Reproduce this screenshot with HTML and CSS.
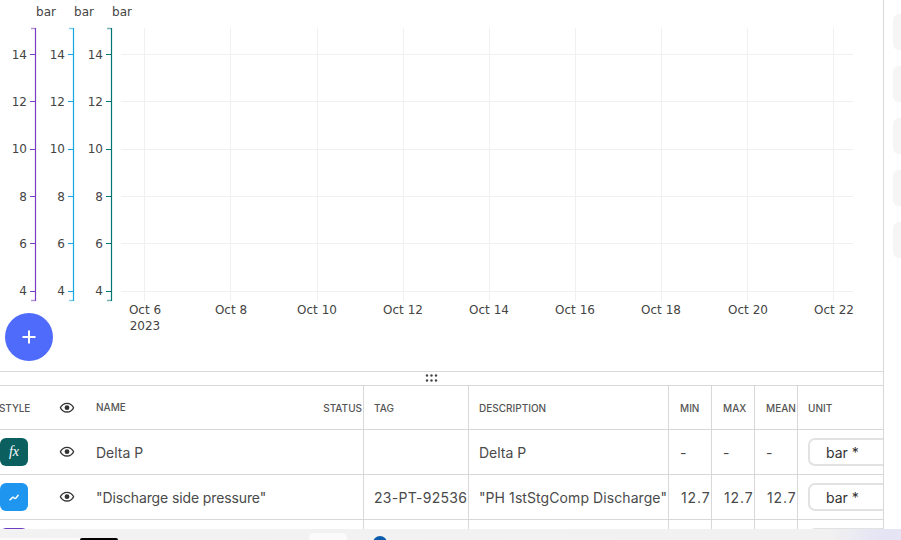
FILE: index.html
```html
<!DOCTYPE html>
<html lang="en">
<head>
<meta charset="utf-8">
<title>Trend chart</title>
<link rel="stylesheet" href="styles.css">
</head>
<body>
<div class="app">
  <main class="main">
    <section class="chart">
      <svg class="plot" width="883" height="371" viewBox="0 0 883 371">
        <g class="grid">
          <path d="M144.5 28V301M230.5 28V301M317.5 28V301M403.5 28V301M489.5 28V301M575.5 28V301M661.5 28V301M747.5 28V301M833.5 28V301"/>
          <path d="M121 54.5H853M121 101.5H853M121 149.5H853M121 196.5H853M121 243.5H853M121 291.5H853"/>
        </g>
        <g class="axis axis-purple">
          <path class="cap" d="M31 28.5H35M31 300.5H35"/>
          <path d="M35.5 28V301M30 54.5H35M30 101.5H35M30 149.5H35M30 196.5H35M30 243.5H35M30 291.5H35"/>
        </g>
        <g class="axis axis-blue">
          <path class="cap" d="M69 28.5H73M69 300.5H73"/>
          <path d="M73.5 28V301M68 54.5H73M68 101.5H73M68 149.5H73M68 196.5H73M68 243.5H73M68 291.5H73"/>
        </g>
        <g class="axis axis-teal">
          <path class="cap" d="M107 28.5H111M107 300.5H111"/>
          <path d="M111.5 28V301M106 54.5H111M106 101.5H111M106 149.5H111M106 196.5H111M106 243.5H111M106 291.5H111"/>
        </g>
        <g class="labels">
          <text x="46" y="16" class="mid">bar</text><text x="84" y="16" class="mid">bar</text><text x="122" y="16" class="mid">bar</text>
          <g class="end">
            <text x="27" y="59">14</text><text x="27" y="106">12</text><text x="27" y="153">10</text><text x="27" y="201">8</text><text x="27" y="248">6</text><text x="27" y="295">4</text>
            <text x="65" y="59">14</text><text x="65" y="106">12</text><text x="65" y="153">10</text><text x="65" y="201">8</text><text x="65" y="248">6</text><text x="65" y="295">4</text>
            <text x="103" y="59">14</text><text x="103" y="106">12</text><text x="103" y="153">10</text><text x="103" y="201">8</text><text x="103" y="248">6</text><text x="103" y="295">4</text>
          </g>
          <g class="mid">
            <text x="145" y="314">Oct 6</text><text x="145" y="330">2023</text>
            <text x="231" y="314">Oct 8</text><text x="317" y="314">Oct 10</text><text x="403" y="314">Oct 12</text><text x="489" y="314">Oct 14</text><text x="575" y="314">Oct 16</text><text x="661" y="314">Oct 18</text><text x="748" y="314">Oct 20</text><text x="834" y="314">Oct 22</text>
          </g>
        </g>
      </svg>
      <button class="fab" type="button" aria-label="Add">
        <svg width="16" height="16" viewBox="0 0 16 16"><path d="M8 1.5V14.5M1.5 8H14.5"/></svg>
      </button>
    </section>

    <div class="handle">
      <svg width="13" height="8" viewBox="0 0 13 8"><g class="dots"><circle cx="2" cy="1.5" r="1.2"/><circle cx="6.5" cy="1.5" r="1.2"/><circle cx="11" cy="1.5" r="1.2"/><circle cx="2" cy="6.5" r="1.2"/><circle cx="6.5" cy="6.5" r="1.2"/><circle cx="11" cy="6.5" r="1.2"/></g></svg>
    </div>

    <section class="table">
      <div class="row head">
        <div class="cell style-col head-style">STYLE</div>
        <div class="cell eye-col"><svg class="eye" viewBox="0 0 24 24"><path d="M12 6c3.79 0 7.17 2.13 8.82 5.5C19.17 14.87 15.79 17 12 17s-7.17-2.13-8.82-5.5C4.83 8.13 8.21 6 12 6m0-2C7 4 2.73 7.11 1 11.5 2.73 15.89 7 19 12 19s9.27-3.11 11-7.5C21.27 7.11 17 4 12 4z"/><circle cx="12" cy="11.5" r="3.6"/></svg></div>
        <div class="cell name-col head-name"><span class="name-up">NAME</span><span>STATUS</span></div>
        <div class="cell line">TAG</div>
        <div class="cell line">DESCRIPTION</div>
        <div class="cell line num">MIN</div>
        <div class="cell line num">MAX</div>
        <div class="cell line num">MEAN</div>
        <div class="cell line">UNIT</div>
      </div>
      <div class="row">
        <div class="cell style-col"><span class="swatch swatch-teal"><span class="fx">fx</span></span></div>
        <div class="cell eye-col"><svg class="eye" viewBox="0 0 24 24"><path d="M12 6c3.79 0 7.17 2.13 8.82 5.5C19.17 14.87 15.79 17 12 17s-7.17-2.13-8.82-5.5C4.83 8.13 8.21 6 12 6m0-2C7 4 2.73 7.11 1 11.5 2.73 15.89 7 19 12 19s9.27-3.11 11-7.5C21.27 7.11 17 4 12 4z"/><circle cx="12" cy="11.5" r="3.6"/></svg></div>
        <div class="cell name-col">Delta P</div>
        <div class="cell line"></div>
        <div class="cell line">Delta P</div>
        <div class="cell line num dash">-</div>
        <div class="cell line num dash">-</div>
        <div class="cell line num dash">-</div>
        <div class="cell line unit"><span class="unit-box">bar *</span></div>
      </div>
      <div class="row">
        <div class="cell style-col"><span class="swatch swatch-blue"><svg width="12" height="12" viewBox="0 0 12 12"><path d="M1.5 9C3 8.5 4 6.2 5 6.2s1 1.4 2.2 1.4S9 5 10.5 3.8"/></svg></span></div>
        <div class="cell eye-col"><svg class="eye" viewBox="0 0 24 24"><path d="M12 6c3.79 0 7.17 2.13 8.82 5.5C19.17 14.87 15.79 17 12 17s-7.17-2.13-8.82-5.5C4.83 8.13 8.21 6 12 6m0-2C7 4 2.73 7.11 1 11.5 2.73 15.89 7 19 12 19s9.27-3.11 11-7.5C21.27 7.11 17 4 12 4z"/><circle cx="12" cy="11.5" r="3.6"/></svg></div>
        <div class="cell name-col name-text">"Discharge side pressure"</div>
        <div class="cell line tag-text">23-PT-92536</div>
        <div class="cell line desc-text">"PH 1stStgComp Discharge"</div>
        <div class="cell line num digits">12.7</div>
        <div class="cell line num digits">12.7</div>
        <div class="cell line num digits">12.7</div>
        <div class="cell line unit"><span class="unit-box">bar *</span></div>
      </div>
      <div class="row">
        <div class="cell style-col"><span class="swatch swatch-purple"></span></div>
        <div class="cell eye-col"></div>
        <div class="cell name-col"></div>
        <div class="cell line"></div>
        <div class="cell line"></div>
        <div class="cell line num"></div>
        <div class="cell line num"></div>
        <div class="cell line num"></div>
        <div class="cell line unit"><span class="unit-box"></span></div>
      </div>
    </section>
  </main>

  <aside class="rail">
    <div class="rail-card"></div>
    <div class="rail-card"></div>
    <div class="rail-card"></div>
    <div class="rail-card"></div>
    <div class="rail-card"></div>
  </aside>
</div>

<footer class="taskbar">
  <div class="tb-left"><span class="tb-pill"></span></div>
  <span class="tb-tab"></span>
  <span class="tb-dot"></span>
</footer>
</body>
</html>
```

FILE: styles.css
```css
* { box-sizing: border-box; }

html, body {
  margin: 0;
  height: 540px;
  overflow: hidden;
  background: #fff;
}

.app {
  display: flex;
  width: 901px;
  height: 540px;
}

.main {
  width: 884px;
  flex: none;
  border-right: 1px solid #d8d8d8;
  overflow: hidden;
  position: relative;
}

/* chart */
.chart {
  height: 371px;
  position: relative;
}

.plot { display: block; }

.grid path {
  fill: none;
  stroke: #f0f0f0;
  stroke-width: 1;
}

.axis path {
  fill: none;
  stroke-width: 1.2;
}
.axis .cap { stroke-width: 1.5; opacity: .55; }
.axis-purple path { stroke: #7a3cc0; }
.axis-blue path { stroke: #18a6e0; }
.axis-teal path { stroke: #007575; }

.labels text {
  font-family: "DejaVu Sans", "Liberation Sans", sans-serif;
  font-size: 12px;
  fill: #444;
}
.labels .mid, .labels .mid text { text-anchor: middle; }
.labels .end text { text-anchor: end; }

.fab {
  position: absolute;
  left: 5px;
  top: 313px;
  width: 48px;
  height: 48px;
  padding: 0;
  border: 0;
  border-radius: 50%;
  background: #4f6bfb;
  display: flex;
  align-items: center;
  justify-content: center;
}
.fab path {
  stroke: #fff;
  stroke-width: 2;
  fill: none;
}

/* drag handle */
.handle {
  height: 14px;
  border-top: 1px solid #d8d8d8;
  display: flex;
  align-items: center;
  justify-content: center;
  padding: 0 20px 2px 0;
}
.handle svg { display: block; }
.dots circle { fill: #444; }

/* table */
.table {
  margin-left: -12px;
  width: 1000px;
  font-family: Inter, "Liberation Sans", sans-serif;
  font-size: 14px;
  color: #4a4a4a;
}

.row {
  display: grid;
  grid-template-columns: 64px 30px 281px 105px 200px 43px 43px 43px 228px;
  height: 45px;
  border-top: 1px solid #d8d8d8;
}

.head {
  height: 44px;
  font-size: 10px;
  font-weight: 500;
  color: #555;
}

.cell {
  display: flex;
  align-items: center;
  white-space: nowrap;
  min-width: 0;
}
.line {
  border-left: 1px solid #d8d8d8;
  padding-left: 10px;
}
.num { padding-left: 12px; }
.head .num { padding-left: 11px; }
.dash { padding-left: 11px; }
.digits { padding-left: 12px; letter-spacing: .9px; }
.tag-text { letter-spacing: .28px; }
.desc-text { letter-spacing: .08px; }
.name-text { letter-spacing: -.12px; }
.head .line:nth-child(4),
.head .line:nth-child(5) { padding-left: 10px; }

.style-col { padding-left: 12px; }
.head-style { padding-left: 11px; letter-spacing: -.1px; }
.eye-col { padding-left: 7px; }
.name-col { padding-left: 14px; }

.head-name {
  justify-content: space-between;
  padding-right: 1px;
}
.name-up { position: relative; top: -1px; }

.eye {
  width: 16px;
  height: 16px;
  display: block;
}
.eye path, .eye circle { fill: #333; }

.swatch {
  width: 28px;
  height: 28px;
  border-radius: 6px;
  display: flex;
  align-items: center;
  justify-content: center;
}
.swatch-teal { background: #0b5f5f; }
.swatch-blue { background: #1e96f0; }
.swatch-purple { background: #6d3fc0; }
.swatch path {
  fill: none;
  stroke: #fff;
  stroke-width: 1.5;
}
.fx {
  font-family: "Liberation Serif", serif;
  font-style: italic;
  font-size: 14px;
  color: #fff;
}

.unit { padding-left: 10px; }
.unit-box {
  width: 120px;
  height: 28px;
  border: 2px solid #e2e2e2;
  border-radius: 7px;
  padding-left: 16px;
  display: flex;
  align-items: center;
  color: #333;
}

/* right rail */
.rail {
  flex: 1;
  padding: 14px 0 0 9px;
  display: flex;
  flex-direction: column;
  gap: 16px;
  overflow: hidden;
}
.rail-card {
  width: 30px;
  height: 36px;
  flex: none;
  background: #f5f5f5;
  border-radius: 6px;
}

/* taskbar overlay */
.taskbar {
  position: fixed;
  left: 0;
  right: 0;
  bottom: 0;
  height: 11px;
  background: linear-gradient(90deg, #f2f2f2 0, #f1f1f1 830px, #e4e4f4 880px, #e4e4f4 100%);
  display: flex;
  align-items: flex-end;
  overflow: hidden;
}
.tb-left {
  width: 118px;
  height: 2px;
  border-radius: 6px 6px 0 0;
  background: #fafafa;
  display: flex;
  justify-content: flex-end;
}
.tb-pill {
  width: 38px;
  height: 2px;
  background: #000;
  border-radius: 6px 6px 0 0;
}
.tb-tab {
  width: 38px;
  height: 7px;
  margin-left: 191px;
  background: #fbfbfb;
  border-radius: 5px 5px 0 0;
}
.tb-dot {
  width: 14px;
  height: 14px;
  flex: none;
  margin: 0 0 -10px 26px;
  background: #0b5cad;
  border-radius: 50%;
}
```
